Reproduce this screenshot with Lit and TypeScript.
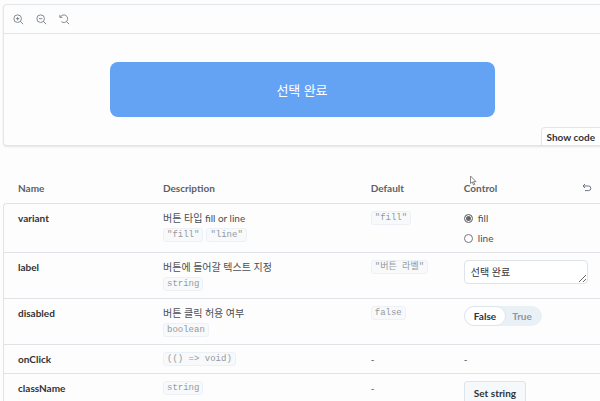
import { LitElement, html, css, svg, nothing, TemplateResult } from "lit";
import { customElement, property, state } from "lit/decorators.js";

interface ArgRow {
  name: string;
  description?: string;
  types: string[];
  fallback?: string;
  control: () => TemplateResult | string;
}

const magnifier = svg`<circle cx="5.5" cy="5.5" r="4.5"/><path d="M8.8 8.8L12 12"/>`;

@customElement("arg-switch")
class ArgSwitch extends LitElement {
  @property({ type: Boolean }) checked = false;

  static styles = css`
    :host { display: inline-block; vertical-align: top; }
    label {
      position: relative;
      display: inline-flex;
      height: 20px;
      border-radius: 10px;
      background: #e9f1f7;
      color: #8f969c;
      font-size: 10px;
      line-height: 18px;
      font-weight: 700;
      cursor: pointer;
    }
    input {
      position: absolute;
      inset: 0;
      width: 100%;
      height: 100%;
      margin: 0;
      opacity: 0;
      cursor: pointer;
    }
    span {
      box-sizing: border-box;
      border: 1px solid transparent;
      border-radius: 10px;
      padding: 0 9px;
    }
    span:last-of-type { padding-left: 5px; }
    span.on {
      background: #fff;
      border-color: #dce6ee;
      color: #333;
    }
  `;

  render() {
    return html`<label>
      <input type="checkbox" role="switch" aria-label="disabled" .checked=${this.checked}
        @change=${(e: Event) => (this.checked = (e.target as HTMLInputElement).checked)} />
      <span class=${this.checked ? "" : "on"}>False</span>
      <span class=${this.checked ? "on" : ""}>True</span>
    </label>`;
  }
}

@customElement("app-root")
class AppRoot extends LitElement {
  @state() private label = "선택 완료";
  @state() private variant = "fill";

  static styles = css`
    :host {
      display: block;
      position: relative;
      height: 100vh;
      overflow: hidden;
      box-sizing: border-box;
      padding: 4px 0 0 3px;
      background: #fdfdfe;
      color: #4a4e52;
      font: 10px/14px Lato, "Noto Sans CJK KR", sans-serif;
    }
    button, textarea { font-family: inherit; color: inherit; }
    svg { display: block; fill: none; stroke: currentColor; }
    .preview {
      border: 1px solid #e1e6ea;
      border-right: 0;
      border-radius: 4px 0 0 4px;
      box-shadow: 0 1px 2px #0000001a;
    }
    .toolbar {
      display: flex;
      gap: 10px;
      height: 28px;
      align-items: center;
      padding-left: 8px;
      border-bottom: 1px solid #e1e6ea;
    }
    .icon {
      border: 0;
      padding: 0;
      background: none;
      color: #6c757d;
      cursor: pointer;
    }
    .toolbar .icon { padding: 0 1px; }
    .stage { display: flex; justify-content: center; padding: 28px 8px 10px; }
    .story {
      width: 385px;
      max-width: 100%;
      height: 55px;
      border: 0;
      border-radius: 8px;
      background: #64a3f4;
      color: #fff;
      font-size: 13px;
    }
    .story.line { background: #fff; color: #64a3f4; border: 1px solid #64a3f4; }
    .actions { display: flex; justify-content: flex-end; }
    .code {
      height: 18px;
      padding: 0 5px;
      border: 1px solid #e1e6ea;
      border-width: 1px 0 0 1px;
      border-radius: 4px 0 0 0;
      background: #fff;
      color: #333;
      font-size: 10px;
      font-weight: 700;
    }
    table {
      width: 100%;
      margin-top: 26px;
      table-layout: fixed;
      border-collapse: separate;
      border-spacing: 0;
    }
    .c-name { width: 26.8%; }
    .c-desc { width: 34.8%; }
    .c-default { width: 15.6%; }
    th { text-align: left; font-weight: 700; }
    thead th { height: 31px; padding: 0; vertical-align: middle; color: #5c6166; }
    th:first-child { padding-left: 15px; }
    .head { display: flex; justify-content: space-between; align-items: center; padding-right: 8px; }
    tbody th, tbody td { vertical-align: top; border-top: 1px solid #dfe3e7; padding: 7px 0; }
    tbody th { border-left: 1px solid #dfe3e7; color: #333; }
    tbody th:first-child { padding-left: 14px; }
    tbody tr:first-child th { border-top-left-radius: 4px; }
    .types { display: flex; gap: 3px; padding-top: 3px; }
    .types.alone { padding-top: 0; }
    code {
      display: inline-block;
      box-sizing: border-box;
      height: 14px;
      padding: 0 3px;
      border: 1px solid #edf1f5;
      border-radius: 3px;
      background: #f7f9fb;
      color: #95999d;
      font: 9px/12px "Liberation Mono", "Noto Sans CJK KR", monospace;
      white-space: nowrap;
      vertical-align: top;
    }
    .radios { display: flex; flex-direction: column; gap: 6px; }
    .radios label { display: flex; align-items: center; gap: 5px; }
    input[type="radio"] {
      appearance: none;
      box-sizing: border-box;
      width: 9px;
      height: 9px;
      margin: 0;
      border: 1px solid #777;
      border-radius: 50%;
      background: #fff;
    }
    input[type="radio"]:checked { background: #666; box-shadow: inset 0 0 0 1px #fff; }
    textarea {
      display: block;
      box-sizing: border-box;
      width: calc(100% - 12px);
      height: 24px;
      padding: 4px 6px;
      border: 1px solid #dde4ea;
      border-radius: 4px;
      background: #fff;
      color: #333;
      font-size: 10px;
      line-height: 14px;
      overflow: hidden;
      resize: vertical;
    }
    .set {
      height: 24px;
      padding: 0 9px;
      border: 1px solid #dde4ea;
      border-radius: 3px;
      background: #f6f9fc;
      color: #333;
      font-size: 10px;
      line-height: 14px;
      font-weight: 700;
    }
    .cursor { position: absolute; left: 469px; top: 175px; color: #888; }
  `;

  private rows: ArgRow[] = [
    {
      name: "variant", description: "버튼 타입 fill or line", types: ['"fill"', '"line"'], fallback: '"fill"',
      control: () => html`<div class="radios" role="radiogroup" aria-label="variant">
        ${["fill", "line"].map((v) => html`<label>
          <input type="radio" name="variant" value=${v} .checked=${this.variant === v} @change=${() => (this.variant = v)} />${v}
        </label>`)}
      </div>`,
    },
    {
      name: "label", description: "버튼에 들어갈 텍스트 지정", types: ["string"], fallback: '"버튼 라벨"',
      control: () => html`<textarea aria-label="label" rows="1" .value=${this.label}
        @input=${(e: Event) => (this.label = (e.target as HTMLTextAreaElement).value)}></textarea>`,
    },
    {
      name: "disabled", description: "버튼 클릭 허용 여부", types: ["boolean"], fallback: "false",
      control: () => html`<arg-switch></arg-switch>`,
    },
    { name: "onClick", types: ["(() => void)"], control: () => "-" },
    { name: "className", types: ["string"], control: () => html`<button class="set">Set string</button>` },
  ];

  private row(r: ArgRow) {
    return html`<tr>
      <th scope="row">${r.name}</th>
      <td>
        ${r.description ?? nothing}
        <div class="types ${r.description ? "" : "alone"}">${r.types.map((t) => html`<code>${t}</code>`)}</div>
      </td>
      <td>${r.fallback ? html`<code>${r.fallback}</code>` : "-"}</td>
      <td>${r.control()}</td>
    </tr>`;
  }

  render() {
    return html`
      <section class="preview">
        <div class="toolbar">
          <button class="icon" aria-label="Zoom in"><svg width="11" height="11" viewBox="0 0 13 13">${magnifier}<path d="M3.5 5.5h4M5.5 3.5v4"/></svg></button>
          <button class="icon" aria-label="Zoom out"><svg width="11" height="11" viewBox="0 0 13 13">${magnifier}<path d="M3.5 5.5h4"/></svg></button>
          <button class="icon" aria-label="Reset zoom"><svg width="11" height="11" viewBox="0 0 13 13"><path d="M1.8 3.4A4.5 4.5 0 1 1 2.8 9M1 1v3h3M8.8 8.8L12 12"/></svg></button>
        </div>
        <div class="stage"><button class="story ${this.variant}">${this.label}</button></div>
        <div class="actions"><button class="code">Show code</button></div>
      </section>
      <table>
        <colgroup><col class="c-name" /><col class="c-desc" /><col class="c-default" /><col /></colgroup>
        <thead>
          <tr>
            <th scope="col">Name</th><th scope="col">Description</th><th scope="col">Default</th>
            <th scope="col"><div class="head">Control
              <button class="icon" aria-label="Reset controls"><svg width="10" height="9" viewBox="0 0 10 9"><path d="M3 1L1 3L3 5M1 3H6.5A2.2 2.2 0 0 1 6.5 7.6H3"/></svg></button>
            </div></th>
          </tr>
        </thead>
        <tbody>${this.rows.map((r) => this.row(r))}</tbody>
      </table>
      <svg class="cursor" width="8" height="11" viewBox="0 0 8 11" aria-hidden="true"><path fill="#fff" d="M1.5 1V8.5L3.3 7L4.6 10L5.8 9.4L4.5 6.6H7Z"/></svg>
    `;
  }
}
